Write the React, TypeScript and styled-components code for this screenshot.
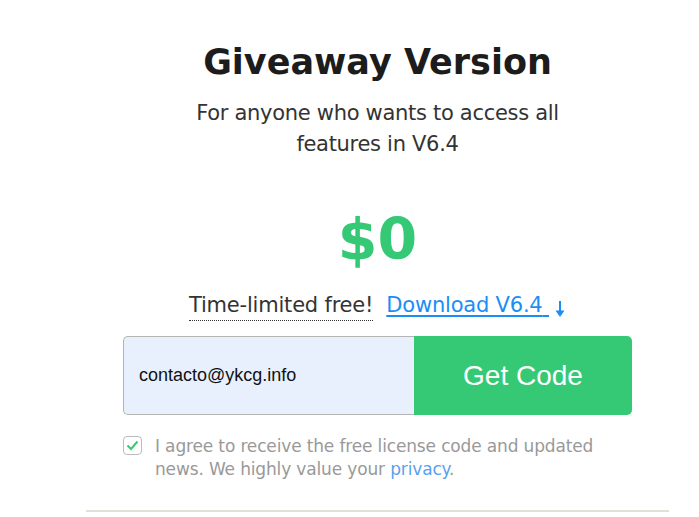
import React from "react";
import styled, { createGlobalStyle } from "styled-components";

const Global = createGlobalStyle`
  html, body {
    margin: 0;
    padding: 0;
    background: #ffffff;
  }
  * {
    box-sizing: border-box;
  }
`;

const Colors = {
  Green: "#35c976",
  Blue: "#1a8ef5",
  Text: "#1c1c1c",
  SubText: "#333333",
  Muted: "#999999",
};

const Page = styled.div`
  width: 100%;
  display: flex;
  font-family: "DejaVu Sans", Verdana, sans-serif;
`;

const Card = styled.section`
  margin-left: 86px;
  width: 583px;
  padding-top: 40px;
  padding-bottom: 29px;
  border-bottom: 2px solid #e2dfd9;
  display: flex;
  flex-direction: column;
  align-items: center;
  text-align: center;
`;

const Title = styled.h1`
  margin: 0;
  font-size: 35px;
  line-height: 44px;
  font-weight: 700;
  color: ${Colors.Text};
`;

const Subtitle = styled.p`
  margin: 14px 0 0;
  width: 390px;
  font-size: 21px;
  letter-spacing: -0.3px;
  line-height: 31px;
  color: ${Colors.SubText};
`;

const Price = styled.div`
  margin-top: 44px;
  font-size: 57px;
  line-height: 70px;
  font-weight: 700;
  color: ${Colors.Green};
`;

const OfferRow = styled.div`
  margin-top: 16px;
  display: flex;
  align-items: baseline;
  gap: 13px;
  font-size: 21px;
  letter-spacing: -0.2px;
  line-height: 30px;
`;

const FreeLabel = styled.span`
  color: ${Colors.SubText};
  border-bottom: 1px dotted ${Colors.SubText};
`;

const DownloadLink = styled.a`
  color: ${Colors.Blue};
  text-decoration: underline;
  text-underline-offset: 3px;
  display: inline-flex;
  align-items: baseline;
  gap: 5px;
`;

const Arrow = styled.svg`
  width: 12px;
  height: 18px;
  align-self: center;
  margin-top: 8px;
`;

const Form = styled.form`
  margin-top: 15px;
  width: 509px;
  height: 79px;
  display: flex;
`;

const EmailInput = styled.input`
  flex: 0 0 291px;
  height: 100%;
  padding: 0 15px;
  border: 1px solid #b4b4b4;
  border-right: none;
  border-radius: 5px 0 0 5px;
  background: #e8f0fe;
  font-family: "Liberation Sans", Arial, sans-serif;
  font-size: 18px;
  color: #111111;
  outline: none;
`;

const SubmitButton = styled.button`
  flex: 1;
  height: 100%;
  border: none;
  border-radius: 0 5px 5px 0;
  background: ${Colors.Green};
  color: #ffffff;
  font-family: "Liberation Sans", Arial, sans-serif;
  font-size: 28px;
  cursor: pointer;
`;

const Consent = styled.label`
  margin-top: 20px;
  width: 509px;
  display: flex;
  align-items: flex-start;
  gap: 13px;
  text-align: left;
  font-size: 17px;
  letter-spacing: -0.15px;
  line-height: 23px;
  color: ${Colors.Muted};
`;

const CheckBox = styled.span`
  flex: 0 0 19px;
  height: 19px;
  margin-top: 1px;
  border: 1px solid #bcbcbc;
  border-radius: 4px;
  display: flex;
  align-items: center;
  justify-content: center;
`;

const PrivacyLink = styled.a`
  color: #5a9ff0;
  text-decoration: none;
`;

const App: React.FC = () => {
  return (
    <Page>
      <Global />
      <Card>
        <Title>Giveaway Version</Title>
        <Subtitle>For anyone who wants to access all features in V6.4</Subtitle>
        <Price>$0</Price>
        <OfferRow>
          <FreeLabel>Time-limited free!</FreeLabel>
          <DownloadLink href="#">
            <span>Download V6.4{"\u00a0"}</span>
            <Arrow viewBox="0 0 12 18">
              <path d="M6 1v12" stroke={Colors.Blue} strokeWidth="2" />
              <path d="M1.5 10.5L6 17l4.5-6.5z" fill={Colors.Blue} />
            </Arrow>
          </DownloadLink>
        </OfferRow>
        <Form onSubmit={(e) => e.preventDefault()}>
          <EmailInput type="email" defaultValue="contacto@ykcg.info" />
          <SubmitButton type="submit">Get Code</SubmitButton>
        </Form>
        <Consent>
          <CheckBox>
            <svg width="13" height="11" viewBox="0 0 13 11">
              <path d="M1.5 5.5l3.5 3.5 6.5-7.5" fill="none" stroke={Colors.Green} strokeWidth="2" />
            </svg>
          </CheckBox>
          <span>
            I agree to receive the free license code and updated news. We highly value your{" "}
            <PrivacyLink href="#">privacy</PrivacyLink>.
          </span>
        </Consent>
      </Card>
    </Page>
  );
};

export default App;
